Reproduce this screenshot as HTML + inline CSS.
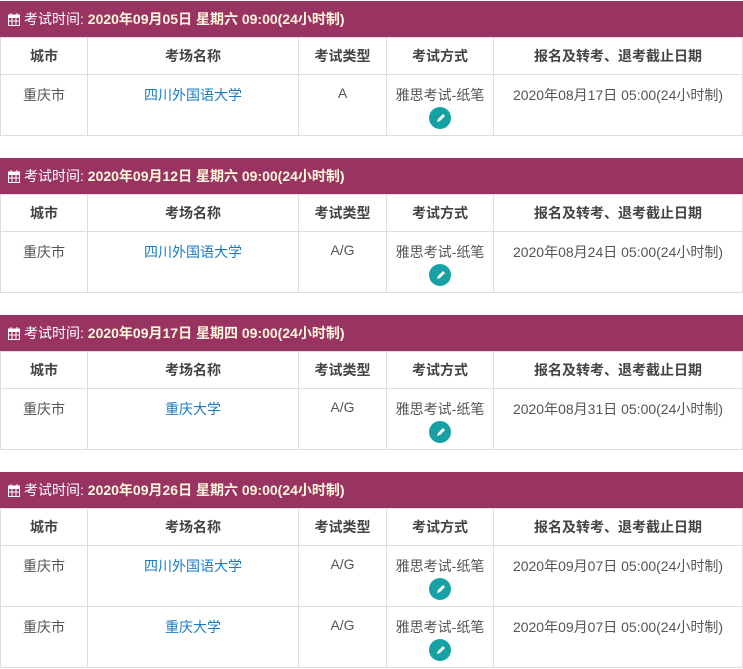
<!DOCTYPE html>
<html><head><meta charset="utf-8"><style>
body{margin:0;background:#fff;font-family:"Liberation Sans","Noto Sans CJK SC",sans-serif;font-size:14px;color:#555;}
.blk{position:absolute;left:0;width:743px;}
.hd{height:36px;background:#993462;color:#fff;line-height:36px;padding-left:8px;font-size:14px;margin-top:1px;box-sizing:border-box;}
.hd b{color:#fff8dc;}
table{border-collapse:collapse;width:743px;table-layout:fixed;}
td,th{border:1px solid #ddd;text-align:center;padding:0;}
th{height:37px;font-weight:bold;color:#444;box-sizing:border-box;}
td{height:61px;vertical-align:top;padding-top:10px;box-sizing:border-box;}
td.l{color:#1a7bc0;}
.ic{display:inline-block;width:22px;height:22px;border-radius:50%;background:#16a2a4;margin-top:2px;vertical-align:top;}
.cal{display:inline-block;vertical-align:-2px;margin-right:4px;}
</style></head><body>

<div class="blk" style="top:0">
<div class="hd"><svg class="cal" width="12" height="13" viewBox="0 0 12 13"><rect x="0.5" y="2" width="11" height="10.5" fill="none" stroke="#fff"/><rect x="0.5" y="2" width="11" height="3" fill="#fff"/><path d="M3 0v3M9 0v3M0 8h12M4 5v8M8 5v8" stroke="#fff"/></svg>考试时间: <b>2020年09月05日 星期六 09:00(24小时制)</b></div>
<table><colgroup><col style="width:87px"><col style="width:211px"><col style="width:88px"><col style="width:107px"><col></colgroup>
<tr><th>城市</th><th>考场名称</th><th>考试类型</th><th>考试方式</th><th>报名及转考、退考截止日期</th></tr>
<tr><td>重庆市</td><td class="l">四川外国语大学</td><td>A</td><td>雅思考试-纸笔<br><span class="ic"><svg width="22" height="22"><path d="M8 15l1-3 5-5 2 2-5 5z" fill="#fff"/></svg></span></td><td>2020年08月17日 05:00(24小时制)</td></tr>
</table></div>

<div class="blk" style="top:157px">
<div class="hd"><svg class="cal" width="12" height="13" viewBox="0 0 12 13"><rect x="0.5" y="2" width="11" height="10.5" fill="none" stroke="#fff"/><rect x="0.5" y="2" width="11" height="3" fill="#fff"/><path d="M3 0v3M9 0v3M0 8h12M4 5v8M8 5v8" stroke="#fff"/></svg>考试时间: <b>2020年09月12日 星期六 09:00(24小时制)</b></div>
<table><colgroup><col style="width:87px"><col style="width:211px"><col style="width:88px"><col style="width:107px"><col></colgroup>
<tr><th>城市</th><th>考场名称</th><th>考试类型</th><th>考试方式</th><th>报名及转考、退考截止日期</th></tr>
<tr><td>重庆市</td><td class="l">四川外国语大学</td><td>A/G</td><td>雅思考试-纸笔<br><span class="ic"><svg width="22" height="22"><path d="M8 15l1-3 5-5 2 2-5 5z" fill="#fff"/></svg></span></td><td>2020年08月24日 05:00(24小时制)</td></tr>
</table></div>

<div class="blk" style="top:314px">
<div class="hd"><svg class="cal" width="12" height="13" viewBox="0 0 12 13"><rect x="0.5" y="2" width="11" height="10.5" fill="none" stroke="#fff"/><rect x="0.5" y="2" width="11" height="3" fill="#fff"/><path d="M3 0v3M9 0v3M0 8h12M4 5v8M8 5v8" stroke="#fff"/></svg>考试时间: <b>2020年09月17日 星期四 09:00(24小时制)</b></div>
<table><colgroup><col style="width:87px"><col style="width:211px"><col style="width:88px"><col style="width:107px"><col></colgroup>
<tr><th>城市</th><th>考场名称</th><th>考试类型</th><th>考试方式</th><th>报名及转考、退考截止日期</th></tr>
<tr><td>重庆市</td><td class="l">重庆大学</td><td>A/G</td><td>雅思考试-纸笔<br><span class="ic"><svg width="22" height="22"><path d="M8 15l1-3 5-5 2 2-5 5z" fill="#fff"/></svg></span></td><td>2020年08月31日 05:00(24小时制)</td></tr>
</table></div>

<div class="blk" style="top:471px">
<div class="hd"><svg class="cal" width="12" height="13" viewBox="0 0 12 13"><rect x="0.5" y="2" width="11" height="10.5" fill="none" stroke="#fff"/><rect x="0.5" y="2" width="11" height="3" fill="#fff"/><path d="M3 0v3M9 0v3M0 8h12M4 5v8M8 5v8" stroke="#fff"/></svg>考试时间: <b>2020年09月26日 星期六 09:00(24小时制)</b></div>
<table><colgroup><col style="width:87px"><col style="width:211px"><col style="width:88px"><col style="width:107px"><col></colgroup>
<tr><th>城市</th><th>考场名称</th><th>考试类型</th><th>考试方式</th><th>报名及转考、退考截止日期</th></tr>
<tr><td>重庆市</td><td class="l">四川外国语大学</td><td>A/G</td><td>雅思考试-纸笔<br><span class="ic"><svg width="22" height="22"><path d="M8 15l1-3 5-5 2 2-5 5z" fill="#fff"/></svg></span></td><td>2020年09月07日 05:00(24小时制)</td></tr>
<tr><td>重庆市</td><td class="l">重庆大学</td><td>A/G</td><td>雅思考试-纸笔<br><span class="ic"><svg width="22" height="22"><path d="M8 15l1-3 5-5 2 2-5 5z" fill="#fff"/></svg></span></td><td>2020年09月07日 05:00(24小时制)</td></tr>
</table></div>

</body></html>
